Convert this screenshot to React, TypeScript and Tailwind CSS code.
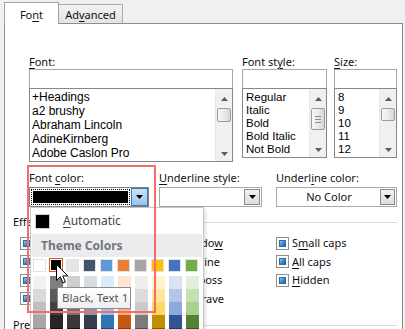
import React from 'react';

const theme = ['#ffffff', '#000000', '#e7e6e6', '#44546a', '#5b9bd5', '#ed7d31', '#a5a5a5', '#ffc000', '#4472c4', '#70ad47'];

const shades = [
  ['#f2f2f2', '#d9d9d9', '#bfbfbf', '#a6a6a6', '#808080'],
  ['#7f7f7f', '#595959', '#404040', '#262626', '#0d0d0d'],
  ['#d0cece', '#aeaaaa', '#757171', '#3a3838', '#171616'],
  ['#d6dce4', '#adb9ca', '#8497b0', '#333f4f', '#222a35'],
  ['#ddebf7', '#bdd7ee', '#9bc2e6', '#2f75b5', '#1f4e78'],
  ['#fce4d6', '#f8cbad', '#f4b084', '#c65911', '#833c0c'],
  ['#ededed', '#dbdbdb', '#c9c9c9', '#7b7b7b', '#525252'],
  ['#fff2cc', '#ffe699', '#ffd966', '#bf8f00', '#806000'],
  ['#d9e1f2', '#b4c6e7', '#8ea9db', '#305496', '#203764'],
  ['#e2efda', '#c6e0b4', '#a9d08e', '#548235', '#375623'],
];

const fonts = ['+Headings', 'a2 brushy', 'Abraham Lincoln', 'AdineKirnberg', 'Adobe Caslon Pro'];
const styles = ['Regular', 'Italic', 'Bold', 'Bold Italic', 'Not Bold'];
const sizes = ['8', '9', '10', '11', '12'];

// accelerator key underline
function U({ c }: { c: string }) {
  return <span className="underline underline-offset-[2px]">{c}</span>;
}

function TinyArrow({ up }: { up?: boolean }) {
  return (
    <svg width="7" height="4" viewBox="0 0 7 4">
      <path d={up ? 'M0 4 L3.5 0 L7 4 Z' : 'M0 0 L7 0 L3.5 4 Z'} fill="#5a5a5a" />
    </svg>
  );
}

function DropArrow() {
  return (
    <svg width="7" height="4" viewBox="0 0 7 4">
      <path d="M0 0 L7 0 L3.5 4 Z" fill="#000" />
    </svg>
  );
}

function Scroll({ thumb, grip }: { thumb: string; grip?: boolean }) {
  return (
    <div className="flex w-[17px] shrink-0 flex-col bg-[#f0f0f0] border-l border-[#e8e8e8]">
      <div className="flex h-[19px] items-center justify-center">
        <TinyArrow up />
      </div>
      <div
        className={`mx-[1px] flex items-center justify-center rounded-[2px] border border-[#9b9b9b] bg-gradient-to-r from-[#f7f7f7] via-[#ebebeb] to-[#d6d6d6] ${thumb}`}
      >
        {grip && (
          <div className="flex flex-col gap-[2px]">
            <div className="h-px w-[6px] bg-[#8a8a8a]" />
            <div className="h-px w-[6px] bg-[#8a8a8a]" />
            <div className="h-px w-[6px] bg-[#8a8a8a]" />
          </div>
        )}
      </div>
      <div className="flex-1" />
      <div className="flex h-[14px] items-center justify-center">
        <TinyArrow />
      </div>
    </div>
  );
}

function Check({ children }: { children?: React.ReactNode }) {
  return (
    <div className="flex h-[18.5px] items-center gap-[3px]">
      <div className="h-[13px] w-[13px] shrink-0 border border-[#8e8f8f] bg-white p-[2px]">
        <div className="h-full w-full border border-[#2f6a9b] bg-gradient-to-br from-[#8ccaf0] via-[#3d8fd1] to-[#1e5f9e]" />
      </div>
      {children && <span className="whitespace-nowrap">{children}</span>}
    </div>
  );
}

function Cursor() {
  return (
    <svg width="13" height="20" viewBox="0 0 13 20">
      <path
        d="M0.5 0.5 L0.5 16.5 L4.3 12.8 L7 19 L9.4 18 L6.8 11.9 L11.8 11.9 Z"
        fill="#fff"
        stroke="#000"
        strokeWidth="1"
        strokeLinejoin="miter"
      />
    </svg>
  );
}

export default function App() {
  return (
    <div className="relative h-[329px] w-[405px] overflow-hidden bg-[#f0f0f0] font-['Noto_Sans',sans-serif] text-[11px] leading-[14px] text-[#111]">
      {/* TABS */}
      <div className="flex h-[24px] items-end pl-[4px]">
        <div className="relative z-10 flex h-[22px] w-[55px] justify-center border border-b-0 border-[#a3a3a3] bg-white pt-[5px]">
          Fo<U c="n" />t
        </div>
        <div className="-ml-px mb-px flex h-[19px] w-[65px] justify-center border border-b-0 border-[#acacac] bg-gradient-to-b from-[#f3f3f3] to-[#e3e3e3] pt-[3px]">
          Ad<U c="v" />anced
        </div>
      </div>

      {/* PANEL */}
      <div className="-mt-px ml-[4px] h-[320px] w-[399px] border border-[#8c8e94] bg-white pt-[31px]">
        {/* font / style / size */}
        <div className="flex items-start pl-[24px]">
          <div className="w-[204px]">
            <div className="h-[14px]">
              <U c="F" />ont:
            </div>
            <div className="h-[20px] border border-[#a8a8a8] bg-white" />
            <div className="-mt-px flex h-[74px] border border-[#828790] bg-white">
              <div className="flex-1 pl-[2px] pt-[1px] font-['Liberation_Sans',sans-serif] text-[12px] leading-[14px] text-black">
                {fonts.map((f) => (
                  <div key={f}>{f}</div>
                ))}
              </div>
              <Scroll thumb="h-[14px]" />
            </div>
          </div>
          <div className="ml-[9px] w-[85px]">
            <div className="h-[14px]">
              Font st<U c="y" />le:
            </div>
            <div className="h-[20px] border border-[#a8a8a8] bg-white" />
            <div className="-mt-px flex h-[70px] border border-[#828790] bg-white">
              <div className="flex-1 pl-[3px] pt-[2px] font-['Liberation_Sans',sans-serif] text-[11.5px] leading-[13px] text-black">
                {styles.map((s) => (
                  <div key={s}>{s}</div>
                ))}
              </div>
              <Scroll thumb="h-[22px]" grip />
            </div>
          </div>
          <div className="ml-[7px] w-[63px]">
            <div className="h-[14px]">
              <U c="S" />ize:
            </div>
            <div className="h-[20px] border border-[#a8a8a8] bg-white" />
            <div className="-mt-px flex h-[70px] border border-[#828790] bg-white">
              <div className="flex-1 pl-[3px] pt-[2px] font-['Liberation_Sans',sans-serif] text-[11.5px] leading-[13px] text-black">
                {sizes.map((s) => (
                  <div key={s}>{s}</div>
                ))}
              </div>
              <Scroll thumb="h-[13px]" />
            </div>
          </div>
        </div>

        {/* color / underline row */}
        <div className="mt-[9px] flex items-start pl-[24px]">
          <div className="w-[120px]">
            <div className="h-[14px]">
              Font <U c="c" />olor:
            </div>
            <div className="mt-[2px] flex h-[20px] border border-[#7f7f7f] bg-white">
              <div className="m-px flex-1 border border-dotted border-black bg-white p-px">
                <div className="h-full w-full bg-black" />
              </div>
              <div className="flex w-[17px] items-center justify-center border border-[#3c7fb1] bg-gradient-to-b from-[#c9e1f7] to-[#9cc4ea]">
                <DropArrow />
              </div>
            </div>
          </div>
          <div className="ml-[10px] w-[103px]">
            <div className="h-[14px]">
              <U c="U" />nderline style:
            </div>
            <div className="mt-[2px] flex h-[20px] border border-[#a8a8a8] bg-white p-px">
              <div className="flex-1" />
              <div className="flex w-[16px] items-center justify-center border border-[#8a8a8a] bg-gradient-to-b from-[#f2f2f2] to-[#dcdcdc]">
                <DropArrow />
              </div>
            </div>
          </div>
          <div className="ml-[14px] w-[121px]">
            <div className="h-[14px]">
              Underl<U c="i" />ne color:
            </div>
            <div className="mt-[2px] flex h-[20px] border border-[#a8a8a8] bg-white p-px">
              <div className="flex flex-1 items-center justify-center">No Color</div>
              <div className="flex w-[15px] items-center justify-center border border-[#8a8a8a] bg-gradient-to-b from-[#f2f2f2] to-[#dcdcdc]">
                <DropArrow />
              </div>
            </div>
          </div>
        </div>

        {/* effects */}
        <div className="mt-[8px] flex h-[14px] items-center pl-[8px] pr-[5px]">
          <span>Effects</span>
          <div className="ml-[4px] h-px flex-1 bg-[#dcdcdc]" />
        </div>
        <div className="mt-[5px] flex pl-[15px]">
          {/* left column: labels sit fully under the colour popup */}
          <div className="w-[140px]">
            <Check />
            <Check />
            <Check />
            <Check />
          </div>
          <div className="w-[116px] pl-[6px]">
            <Check>
              Shado<U c="w" />
            </Check>
            <Check>
              <U c="O" />utline
            </Check>
            <Check>
              <U c="E" />mboss
            </Check>
            <Check>
              En<U c="g" />rave
            </Check>
          </div>
          <div>
            <Check>
              S<U c="m" />all caps
            </Check>
            <Check>
              <U c="A" />ll caps
            </Check>
            <Check>
              <U c="H" />idden
            </Check>
          </div>
        </div>
        <div className="mt-[10px] flex h-[14px] items-center pl-[8px] pr-[5px]">
          <span>Preview</span>
          <div className="ml-[4px] h-px flex-1 bg-[#dcdcdc]" />
        </div>
      </div>

      {/* COLOR POPUP */}
      <div className="absolute left-[30px] top-[207px] h-[140px] w-[174px] border border-[#c6c6c6] bg-white shadow-[2px_2px_3px_rgba(0,0,0,0.12)]">
        <div className="flex h-[26px] items-center pl-[4px]">
          <div className="h-[15px] w-[15px] border border-[#d0d0d0] bg-black" />
          <span className="ml-[13px] text-[12px] text-[#444]">
            <U c="A" />utomatic
          </span>
        </div>
        <div className="mx-px flex h-[23px] items-center bg-[#ececec] pl-[9px] text-[12px] font-bold text-[#6f7782]">
          Theme Colors
        </div>
        <div className="mt-[2px] flex gap-[4px] pl-[2px]">
          {theme.map((c, i) => (
            <div
              key={c}
              className={
                i === 1
                  ? 'h-[14px] w-[14px] -my-px -mx-px border border-[#e2571e] p-px'
                  : 'h-[13px] w-[13px] border border-[#e2e2e2]'
              }
              style={i === 1 ? undefined : { backgroundColor: c }}
            >
              {i === 1 && <div className="h-full w-full bg-black" />}
            </div>
          ))}
        </div>
        <div className="mt-[4px] flex gap-[4px] pl-[2px]">
          {shades.map((col, i) => (
            <div key={i} className="flex flex-col">
              {col.map((c) => (
                <div key={c} className="h-[13px] w-[13px]" style={{ backgroundColor: c }} />
              ))}
            </div>
          ))}
        </div>
      </div>

      {/* TOOLTIP */}
      <div className="absolute left-[57px] top-[287px] flex h-[22px] w-[74px] items-center whitespace-nowrap border border-[#8c8c8c] bg-gradient-to-b from-white to-[#eeeef3] pl-[4px] text-[11.5px] text-[#575757]">
        Black, Text 1
      </div>

      {/* HIGHLIGHT */}
      <div className="pointer-events-none absolute left-[27px] top-[165px] h-[148px] w-[129px] border-2 border-[#f46d6d]" />

      {/* CURSOR */}
      <div className="absolute left-[56px] top-[264px]">
        <Cursor />
      </div>
    </div>
  );
}
